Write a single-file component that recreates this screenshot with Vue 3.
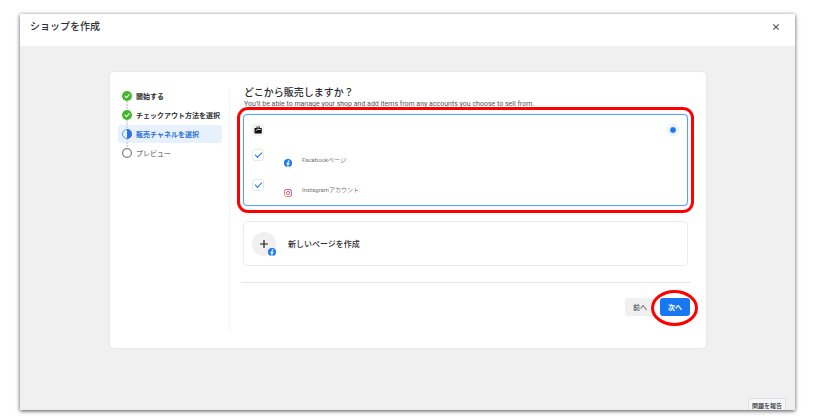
<template>
  <div class="shop-window">
    <header class="window-header">
      <h1 class="window-title">ショップを作成</h1>
      <button class="close-btn" type="button" aria-label="閉じる">
        <svg width="8" height="8" viewBox="0 0 8 8" fill="none" stroke="currentColor" stroke-width="1.2">
          <path d="M1.300 1.300l5.400 5.400M6.700 1.300L1.300 6.700" />
        </svg>
      </button>
    </header>

    <main class="window-body">
      <div class="card">
        <ol class="steps">
          <li v-for="step in steps" :key="step.label" class="step" :class="step.state">
            <svg class="step-icon" viewBox="0 0 20 20">
              <template v-if="step.state === 'done'">
                <circle cx="10" cy="10" r="10" fill="#42b72a" />
                <path d="M6 10.400l3 2.800 5.400-5.800" fill="none" stroke="#fff" stroke-width="2.200" stroke-linecap="round" />
              </template>
              <template v-else-if="step.state === 'current'">
                <circle cx="10" cy="10" r="9" fill="#e7f3ff" stroke="#5b93e8" stroke-width="2" />
                <path d="M10 0a10 10 0 0 1 0 20z" fill="#2f74e6" />
              </template>
              <circle v-else cx="10" cy="10" r="8.800" fill="#fff" stroke="#7b8087" stroke-width="2.400" />
            </svg>
            <span>{{ step.label }}</span>
          </li>
        </ol>

        <section class="content">
          <h2 class="content-title">どこから販売しますか？</h2>
          <p class="content-sub">You'll be able to manage your shop and add items from any accounts you choose to sell from.</p>

          <div class="account-box">
            <div class="account-head">
              <span class="shop-icon">
                <svg width="8" height="8" viewBox="0 0 16 16">
                  <path d="M5 4V2.500C5 1.700 5.700 1 6.500 1h4c.8 0 1.500.7 1.500 1.500V4h2.500c.6 0 1 .4 1 1v8.500c0 .8-.7 1.500-1.500 1.500H2.500C1.700 15 1 14.300 1 13.500V5c0-.6.4-1 1-1z" fill="#111" />
                  <path d="M3.500 9.500l3-2.500h7M6.500 3.500h4" fill="none" stroke="#fff" stroke-width="1.600" />
                </svg>
              </span>
              <input v-model="selected" class="radio" type="radio" name="account" value="existing" aria-label="このアカウントを使用" />
            </div>

            <label class="channel">
              <input v-model="useFacebook" class="check" type="checkbox" />
              <svg class="channel-icon" viewBox="0 0 16 16">
                <circle cx="8" cy="8" r="8" fill="#1877f2" />
                <path d="M6.800 16V10.300H4.800V8h2V6.300c0-2.100 1.200-3.200 3-3.200.8 0 1.500.1 1.500.1v2h-1c-1 0-1.300.6-1.300 1.200V8h2.300l-.4 2.300H9V16z" fill="#fff" />
              </svg>
              <span class="channel-name">Facebookページ:</span>
            </label>

            <label class="channel">
              <input v-model="useInstagram" class="check" type="checkbox" />
              <svg class="channel-icon" viewBox="0 0 16 16" fill="none" stroke="url(#insta)" stroke-width="1.800">
                <defs>
                  <linearGradient id="insta" x1="0" y1="16" x2="16" y2="0" gradientUnits="userSpaceOnUse">
                    <stop offset="0" stop-color="#f7a860" />
                    <stop offset="0.500" stop-color="#e0457b" />
                    <stop offset="1" stop-color="#a04fd0" />
                  </linearGradient>
                </defs>
                <rect x="1" y="1" width="14" height="14" rx="3.500" />
                <circle cx="8" cy="8" r="3.200" />
                <circle cx="12" cy="4" r="0.400" />
              </svg>
              <span class="channel-name">Instagramアカウント:</span>
            </label>

            <span class="highlight-frame" aria-hidden="true"></span>
          </div>

          <button class="new-page" type="button">
            <span class="plus">
              <svg width="10" height="10" viewBox="0 0 10 10" stroke="#1c1e21" stroke-width="1.200">
                <path d="M5 1v8M1 5h8" />
              </svg>
              <svg class="plus-badge" viewBox="0 0 16 16">
                <circle cx="8" cy="8" r="8" fill="#1877f2" />
                <path d="M6.800 16V10.300H4.800V8h2V6.300c0-2.100 1.200-3.200 3-3.200.8 0 1.500.1 1.500.1v2h-1c-1 0-1.300.6-1.300 1.200V8h2.300l-.4 2.300H9V16z" fill="#fff" />
              </svg>
            </span>
            新しいページを作成
          </button>

          <footer class="actions">
            <button class="btn" type="button">前へ</button>
            <div class="next-wrap">
              <button class="btn primary" type="button">次へ</button>
              <span class="highlight-ring" aria-hidden="true"></span>
            </div>
          </footer>
        </section>
      </div>

      <button class="report-btn" type="button">問題を報告</button>
    </main>
  </div>
</template>

<script setup>
import { ref } from "vue";

const steps = [
  { label: "開始する", state: "done" },
  { label: "チェックアウト方法を選択", state: "done" },
  { label: "販売チャネルを選択", state: "current" },
  { label: "プレビュー", state: "todo" },
];

const selected = ref("existing");
const useFacebook = ref(true);
const useInstagram = ref(true);
</script>

<style>
body {
  background: #fff;
}
</style>

<style scoped>
* {
  box-sizing: border-box;
}

.shop-window {
  display: flex;
  flex-direction: column;
  min-height: calc(100vh - 23px);
  margin: 14px 25px 9px 20px;
  overflow: hidden;
  background: #f0f0f0;
  box-shadow: 0 1px 4px rgba(0, 0, 0, 0.7);
  font-family: Roboto, "Noto Sans CJK JP", sans-serif;
  color: #2b2d31;
}

button {
  border: none;
  padding: 0;
  font-family: inherit;
  color: inherit;
  cursor: pointer;
}

.window-header {
  display: flex;
  align-items: center;
  justify-content: space-between;
  height: 32px;
  padding: 0 15px 6px 10px;
  background: #fff;
}

.window-title {
  margin: 0;
  font-size: 10px;
  font-weight: 500;
  line-height: 16px;
}

.close-btn {
  display: flex;
  background: none;
  color: #555;
}

.window-body {
  flex: 1;
  display: flex;
  flex-direction: column;
  justify-content: space-between;
}

.card {
  display: grid;
  grid-template-columns: 120px 1fr;
  margin: 26px 89px 50px 90px;
  padding: 15px 0 16px;
  background: #fff;
  border-radius: 4px;
  box-shadow: 0 0 2px rgba(0, 0, 0, 0.12);
}

.steps {
  display: flex;
  flex-direction: column;
  gap: 1px;
  margin: 0;
  padding: 0 7px 0 8px;
  list-style: none;
  border-right: 1px solid #f5f5f5;
}

.step {
  position: relative;
  display: flex;
  align-items: center;
  gap: 4px;
  height: 18px;
  padding-left: 4px;
  border-radius: 3px;
  font-size: 7px;
  font-weight: 700;
  white-space: nowrap;
}

.step + .step::before {
  content: "";
  position: absolute;
  top: -5px;
  left: 8px;
  height: 8px;
  border-left: 2px dotted #d9dbde;
}

.step.current {
  background: #e7f1fe;
  color: #2a6fd6;
}

.step.todo {
  color: #777;
  font-weight: 500;
}

.step-icon {
  width: 10px;
  height: 10px;
  flex: none;
}

.content {
  padding: 0 18px 0 13px;
}

.content-title {
  margin: 0 1px;
  font-size: 10px;
  font-weight: 500;
  line-height: 12px;
}

.content-sub {
  margin: 0 1px 5px;
  font-size: 7px;
  line-height: 10px;
  color: #555;
}

.account-box {
  position: relative;
  display: flex;
  flex-direction: column;
  gap: 12px;
  padding: 8px;
  border: 1px solid #5c9ff7;
  border-radius: 4px;
  box-shadow: 0 0 1px #5c9ff7;
}

.highlight-frame {
  position: absolute;
  inset: -8px -7px;
  border: 3px solid #f00;
  border-radius: 11px;
  pointer-events: none;
}

.account-head {
  display: flex;
  align-items: center;
  justify-content: space-between;
  height: 14px;
}

.shop-icon {
  display: grid;
  place-items: center;
  width: 12px;
  height: 12px;
  border-radius: 2px;
  background: #f2f2f2;
}

.radio {
  appearance: none;
  width: 12px;
  height: 12px;
  margin: 0;
  border: 1px solid #e6e6e6;
  border-radius: 50%;
  background: radial-gradient(circle, #1877f2 2px, #fff 4px);
}

.channel {
  display: flex;
  align-items: flex-end;
  height: 18px;
}

.check {
  appearance: none;
  align-self: flex-start;
  display: grid;
  place-items: center;
  width: 12px;
  height: 12px;
  margin: 0;
  border: 1px solid #e8e8e8;
  border-radius: 3px;
}

.check:checked::after {
  content: "";
  width: 6px;
  height: 3px;
  margin-bottom: 2px;
  border: solid #1877f2;
  border-width: 0 0 1px 1px;
  transform: rotate(-45deg);
}

.channel-icon {
  width: 8px;
  height: 8px;
  margin-left: 20px;
}

.channel-name {
  margin-left: 10px;
  padding-bottom: 1px;
  font-size: 6px;
  line-height: 12px;
  color: #777;
}

.new-page {
  display: flex;
  align-items: center;
  gap: 12px;
  width: 100%;
  height: 45px;
  margin-top: 15px;
  padding: 0 8px;
  border: 1px solid #ececec;
  border-radius: 4px;
  background: #fff;
  font-size: 8px;
  font-weight: 500;
}

.plus {
  position: relative;
  display: grid;
  place-items: center;
  width: 24px;
  height: 24px;
  border-radius: 50%;
  background: #f0f0f0;
}

.plus-badge {
  position: absolute;
  right: 0;
  bottom: 0;
  width: 8px;
  height: 8px;
}

.actions {
  display: flex;
  justify-content: flex-end;
  gap: 5px;
  margin: 16px -2px 0;
  padding: 15px 0 16px;
  border-top: 1px solid #e4e4e4;
}

.btn {
  display: block;
  width: 30px;
  height: 18px;
  border-radius: 3px;
  background: #f0f0f0;
  font-size: 7px;
  font-weight: 400;
}

.primary {
  background: #1877f2;
  color: #fff;
  font-weight: 700;
}

.next-wrap {
  position: relative;
}

.highlight-ring {
  position: absolute;
  inset: -8px -8px -10px -9px;
  border: 3px solid #f00;
  border-radius: 50%;
  pointer-events: none;
}

.report-btn {
  align-self: flex-end;
  height: 14px;
  margin: 0 9px -2px 0;
  padding: 0 3px;
  border: 1px solid #dcdfe3;
  border-radius: 2px;
  background: #f5f6f7;
  font-size: 6px;
  font-weight: 500;
}
</style>
